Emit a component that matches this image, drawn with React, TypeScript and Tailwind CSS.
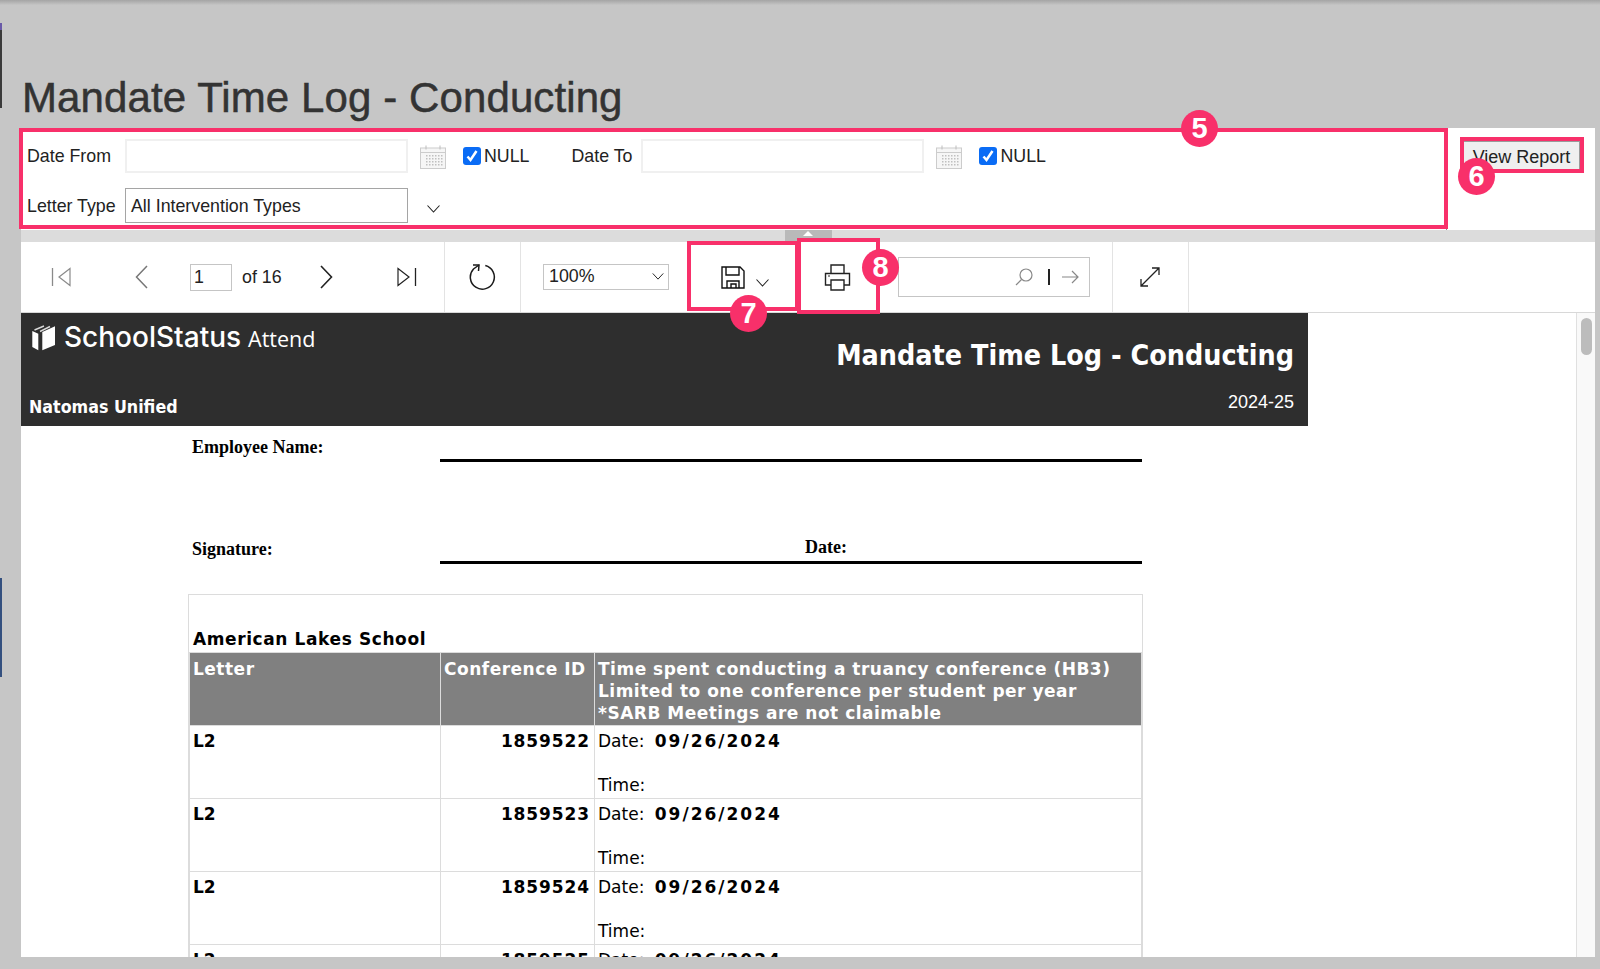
import { ReactNode } from "react";

const rows = ["1859522", "1859523", "1859524", "1859525"];

function Badge({ n, className }: { n: string; className: string }) {
  return (
    <div
      className={`absolute w-[37px] h-[37px] rounded-full bg-[#f8306a] text-white flex items-center justify-center text-[29px] font-bold font-['Liberation_Sans',sans-serif] ${className}`}
    >
      {n}
    </div>
  );
}

function Divider({ className }: { className: string }) {
  return <div className={`w-px h-full bg-[#e3e3e3] ${className}`} />;
}

function CalendarIcon() {
  return (
    <svg width="26" height="24" viewBox="0 0 26 24" fill="none" className="shrink-0 mt-[2px]">
      <rect x="0.5" y="3" width="25" height="20.5" fill="#f6f6f6" stroke="#cccccc" />
      <path d="M1 7.500h24" stroke="#cccccc" />
      <path d="M6 0.5v4M20 0.5v4" stroke="#bdbdbd" />
      {[10, 13, 16, 19].map((y) =>
        [6, 9, 12, 15, 18, 21].map((x) => (
          <rect key={`${x}-${y}`} x={x} y={y} width="1.5" height="1.5" fill="#c0c0c0" />
        ))
      )}
    </svg>
  );
}

function Checkbox() {
  return (
    <div className="w-[18px] h-[18px] rounded-[3px] bg-[#0a6cf5] flex items-center justify-center shrink-0">
      <svg width="14" height="14" viewBox="0 0 14 14" fill="none">
        <path d="M2.5 7.5l3 3.5 6-9" stroke="white" strokeWidth="2.5" />
      </svg>
    </div>
  );
}

function Chevron({ w = 13, h = 8 }: { w?: number; h?: number }) {
  return (
    <svg width={w} height={h} viewBox="0 0 13 8" fill="none" className="shrink-0">
      <path d="M0.5 0.5l6 6.5 6-6.5" stroke="#222" strokeWidth="1.1" />
    </svg>
  );
}

function Param({ children, className = "" }: { children: ReactNode; className?: string }) {
  return <span className={`text-[17.8px] text-[#222] ${className}`}>{children}</span>;
}

function Cell({ children, className = "" }: { children: ReactNode; className?: string }) {
  return (
    <td className={`border border-[#dcdcdc] align-top pl-[3px] pr-[4px] leading-[22px] ${className}`}>
      {children}
    </td>
  );
}

export default function App() {
  return (
    <div className="relative w-[1600px] h-[969px] bg-[#c6c6c6] overflow-hidden flex flex-col font-['Liberation_Sans',Arial,sans-serif]">
      {/* title */}
      <div className="h-[128px] shrink-0 flex items-end pl-[22px] pb-[5px] bg-gradient-to-b from-[#a4a4a4] from-0% to-[#c6c6c6] to-[4%]">
        <h1 className="text-[42px] leading-[50px] text-[#333] tracking-[0.1px] [-webkit-text-stroke:0.5px_#333]">Mandate Time Log - Conducting</h1>
      </div>

      <div className="flex-1 min-h-0 flex flex-col ml-[21px] mr-[5px] mb-[12px] bg-white">
        {/* params */}
        <div className="h-[102px] shrink-0 flex">
          <div className="w-[1426px] border-r border-[#8a8a8a] flex flex-col pl-[6px] pt-[11px]">
            <div className="flex items-center h-[34px]">
              <Param className="w-[98px]">Date From</Param>
              <div className="w-[283px] h-[34px] border-2 border-[#f0f0f0]" />
              <div className="ml-[12px]"><CalendarIcon /></div>
              <div className="ml-[17px]"><Checkbox /></div>
              <Param className="ml-[3px]">NULL</Param>
              <Param className="ml-[42px] w-[70px]">Date To</Param>
              <div className="w-[283px] h-[34px] border-2 border-[#f0f0f0]" />
              <div className="ml-[12px]"><CalendarIcon /></div>
              <div className="ml-[17px]"><Checkbox /></div>
              <Param className="ml-[3px]">NULL</Param>
            </div>
            <div className="flex items-center h-[35px] mt-[15px]">
              <Param className="w-[98px] pt-[1px]">Letter Type</Param>
              <div className="w-[283px] h-[35px] border border-[#a5a5a5] flex items-center pl-[5px] pt-[1px]">
                <span className="text-[17.8px] text-[#222]">All Intervention Types</span>
              </div>
              <div className="ml-[19px] mt-[7px]"><Chevron /></div>
            </div>
          </div>
          <div className="flex-1 pt-[13px] pl-[16px]">
            <button className="w-[117px] h-[29px] bg-[#efefef] border border-[#9a9a9a] pt-[3px] text-[18px] text-[#222] flex items-center justify-center">
              View Report
            </button>
          </div>
        </div>

        {/* splitter */}
        <div className="h-[12px] shrink-0 bg-[#dcdcdc] flex justify-center">
          <div className="w-[47px] h-[12px] bg-[#b9b9b9] flex justify-center">
            <div className="w-0 h-0 border-x-[5px] border-x-transparent border-b-[5px] border-b-white mt-[1px]" />
          </div>
        </div>

        {/* toolbar */}
        <div className="h-[71px] shrink-0 flex items-center border-b border-[#d8d8d8]">
          <div className="ml-[30px] w-[393px] flex items-center">
            <svg width="21" height="20" viewBox="0 0 21 20" fill="none" className="shrink-0">
              <path d="M1.5 1v18" stroke="#8a8a8a" strokeWidth="1.3" />
              <path d="M19 1.5v17L8 10z" stroke="#8a8a8a" strokeWidth="1.2" />
            </svg>
            <svg width="15" height="24" viewBox="0 0 15 24" fill="none" className="ml-[62px] shrink-0">
              <path d="M13 1L2.5 12 13 23" stroke="#777" strokeWidth="1.5" />
            </svg>
            <div className="ml-[41px] w-[42px] h-[27px] border border-[#c5c5c5] flex items-center pl-[3px] text-[17.8px] text-[#222]">1</div>
            <span className="ml-[10px] text-[17.8px] text-[#222]">of 16</span>
            <svg width="15" height="24" viewBox="0 0 15 24" fill="none" className="ml-[37px] shrink-0">
              <path d="M2 1l10.5 11L2 23" stroke="#222" strokeWidth="1.6" />
            </svg>
            <svg width="21" height="20" viewBox="0 0 21 20" fill="none" className="ml-[62px] shrink-0">
              <path d="M2 1.5v17L13 10z" stroke="#222" strokeWidth="1.2" />
              <path d="M19.5 1v18" stroke="#222" strokeWidth="1.3" />
            </svg>
          </div>
          <Divider className="" />
          <div className="w-[75px] flex justify-center pr-[2px]">
            <svg width="28" height="28" viewBox="0 0 28 28" fill="none">
              <path d="M17.3 2.5A12 12 0 1 1 5.500 6L11 2" stroke="#1a1a1a" strokeWidth="1.5" />
              <path d="M5 2h6l-.5 6" stroke="#1a1a1a" strokeWidth="1.5" />
            </svg>
          </div>
          <Divider className="" />
          <div className="ml-[22px] mb-[1px] w-[126px] h-[26px] border border-[#c5c5c5] flex items-center justify-between pl-[5px] pr-[4px] text-[17.8px] text-[#222]">
            <span className="mt-[-1px]">100%</span>
            <Chevron w={12} h={7} />
          </div>
          <div className="ml-[52px] flex items-end">
            <svg width="24" height="23" viewBox="0 0 24 23" fill="none">
              <path d="M1 1h18l4 4v17H1z" stroke="#111" strokeWidth="1.4" />
              <path d="M5 1v8h13V1M6 22v-7h12v7M10 22v-4h5v4" stroke="#111" strokeWidth="1.4" />
            </svg>
            <div className="ml-[11px] mb-[2px]"><Chevron /></div>
          </div>
          <div className="ml-[55px]">
            <svg width="27" height="27" viewBox="0 0 27 27" fill="none">
              <path d="M7 9V1h13v8M7 21H1.5V9.5h24V21H20" stroke="#222" strokeWidth="1.4" />
              <path d="M7 16h13v10H7z" stroke="#222" strokeWidth="1.4" />
              <path d="M4 12h2" stroke="#222" strokeWidth="1" />
            </svg>
          </div>
          <div className="ml-[47px] w-[192px] h-[40px] border border-[#c5c5c5] flex items-center justify-end pr-[10px]">
            <svg width="18" height="18" viewBox="0 0 18 18" fill="none">
              <circle cx="11" cy="7" r="6" stroke="#888" strokeWidth="1.2" />
              <path d="M6.5 11.5L1 17" stroke="#888" strokeWidth="1.2" />
            </svg>
            <div className="ml-[15px] w-[2px] h-[16px] bg-[#222]" />
            <svg width="17" height="14" viewBox="0 0 17 14" fill="none" className="ml-[12px]">
              <path d="M0 7h16M10 1l6 6-6 6" stroke="#888" strokeWidth="1.2" />
            </svg>
          </div>
          <Divider className="ml-[22px]" />
          <div className="w-[75px] flex justify-center pr-[2px]">
            <svg width="22" height="22" viewBox="0 0 22 22" fill="none">
              <path d="M2 20L20 2M13 2h7v7M2 13v7h7" stroke="#222" strokeWidth="1.3" />
            </svg>
          </div>
          <Divider className="" />
        </div>

        {/* report */}
        <div className="flex-1 min-h-0 flex overflow-hidden">
          <div className="flex-1 min-w-0 overflow-hidden">
            <div className="w-[1287px] h-[113px] bg-[#2e2e2e] flex flex-col relative text-white">
              <div className="flex items-end pl-[10px] pt-[9px]">
                <svg width="24" height="27" viewBox="0 -2 24 27" fill="white" className="shrink-0 mb-[1px]">
                  <path d="M1.300 5l6 2.700v16.600l-6-3.300zM11.300 6L24 .3V19l-12.700 5.300z" />
                  <path d="M3.500 4L13 0M9 5.500L19 .5" stroke="#d8d8d8" strokeWidth="1.4" fill="none" />
                </svg>
                <span className="ml-[9px] text-[28px] leading-[30px] font-medium font-['Inter',sans-serif]">SchoolStatus</span>
                <span className="ml-[7px] text-[21.500px] leading-[26px] font-['Open_Sans',sans-serif]">Attend</span>
              </div>
              <div className="flex justify-end pr-[14px] mt-[-14px]">
                <span className="text-[28.4px] leading-[36px] font-bold [font-stretch:condensed] font-['DejaVu_Sans',sans-serif]">Mandate Time Log - Conducting</span>
              </div>
              <div className="flex items-end justify-between pl-[8px] pr-[14px] mt-[17px]">
                <span className="text-[17.7px] leading-[22px] font-bold [font-stretch:condensed] font-['DejaVu_Sans',sans-serif]">Natomas Unified</span>
                <span className="text-[18px] leading-[22px] mb-[5px]">2024-25</span>
              </div>
            </div>

            <div className="ml-[167px] w-[954px] font-['Liberation_Serif',serif] font-bold text-[18px] text-black">
              <div className="h-[36px] flex">
                <span className="w-[252px] pl-[4px] pt-[9px] leading-[24px]">Employee Name:</span>
                <div className="flex-1 border-b-[3px] border-black" />
              </div>
              <div className="h-[102px] flex">
                <span className="w-[252px] pl-[4px] pt-[75px] leading-[24px]">Signature:</span>
                <div className="flex-1 border-b-[3px] border-black text-center pt-[73px] leading-[24px]">
                  <span className="ml-[70px]">Date:</span>
                </div>
              </div>
            </div>

            <div className="mt-[30px] ml-[167px] w-[955px] border border-[#dcdcdc] font-['DejaVu_Sans',sans-serif] text-[17px] text-black">
              <div className="h-[57px] flex items-end pl-[4px] font-bold leading-[24px] pb-[1px] tracking-[0.6px]">American Lakes School</div>
              <table className="w-full border-collapse table-fixed">
                <colgroup>
                  <col className="w-[251px]" />
                  <col className="w-[154px]" />
                  <col />
                </colgroup>
                <thead>
                  <tr className="bg-[#808080] text-white font-bold tracking-[0.5px]">
                    <Cell className="pt-[5px] pb-[0.5px]">Letter</Cell>
                    <Cell className="pt-[5px] pb-[0.5px]">Conference ID</Cell>
                    <Cell className="pt-[5px] pb-[0.5px]">
                      Time spent conducting a truancy conference (HB3)
                      <br />
                      Limited to one conference per student per year
                      <br />
                      *SARB Meetings are not claimable
                    </Cell>
                  </tr>
                </thead>
                <tbody>
                  {rows.map((id) => (
                    <tr key={id}>
                      <Cell className="font-bold pt-[4px] pb-[2px]">L2</Cell>
                      <Cell className="font-bold text-right tracking-[0.9px] pt-[4px] pb-[2px]">{id}</Cell>
                      <Cell className="pt-[4px] pb-[2px]">
                        Date: <b className="ml-[5px] tracking-[2px]">09/26/2024</b>
                        <br />
                        <br />
                        Time:
                      </Cell>
                    </tr>
                  ))}
                </tbody>
              </table>
            </div>
          </div>
          <div className="w-[19px] shrink-0 bg-[#f9f9f9] border-l border-[#e0e0e0] flex justify-center pt-[5px]">
            <div className="w-[11px] h-[37px] rounded-full bg-[#bcbcbc]" />
          </div>
        </div>
      </div>

      {/* bits of the window behind, at the left edge */}
      <div className="absolute left-0 top-[23px] w-[2px] h-[7px] bg-[#6a5aa8]" />
      <div className="absolute left-0 top-[30px] w-[2px] h-[78px] bg-[#3a3a3a]" />
      <div className="absolute left-0 top-[578px] w-[2px] h-[99px] bg-[#34507f]" />

      {/* annotations */}
      <div className="absolute left-[19px] top-[128px] w-[1429px] h-[101px] border-[4px] border-[#f8306a]" />
      <div className="absolute left-[1460px] top-[137px] w-[124px] h-[36px] border-[4px] border-[#f8306a]" />
      <div className="absolute left-[687px] top-[241px] w-[112px] h-[70px] border-[4px] border-[#f8306a]" />
      <div className="absolute left-[797px] top-[238px] w-[83px] h-[76px] border-[4px] border-[#f8306a]" />
      <Badge n="5" className="left-[1181px] top-[110px]" />
      <Badge n="6" className="left-[1458px] top-[158px]" />
      <Badge n="7" className="left-[730px] top-[295px]" />
      <Badge n="8" className="left-[862px] top-[249px]" />
    </div>
  );
}
